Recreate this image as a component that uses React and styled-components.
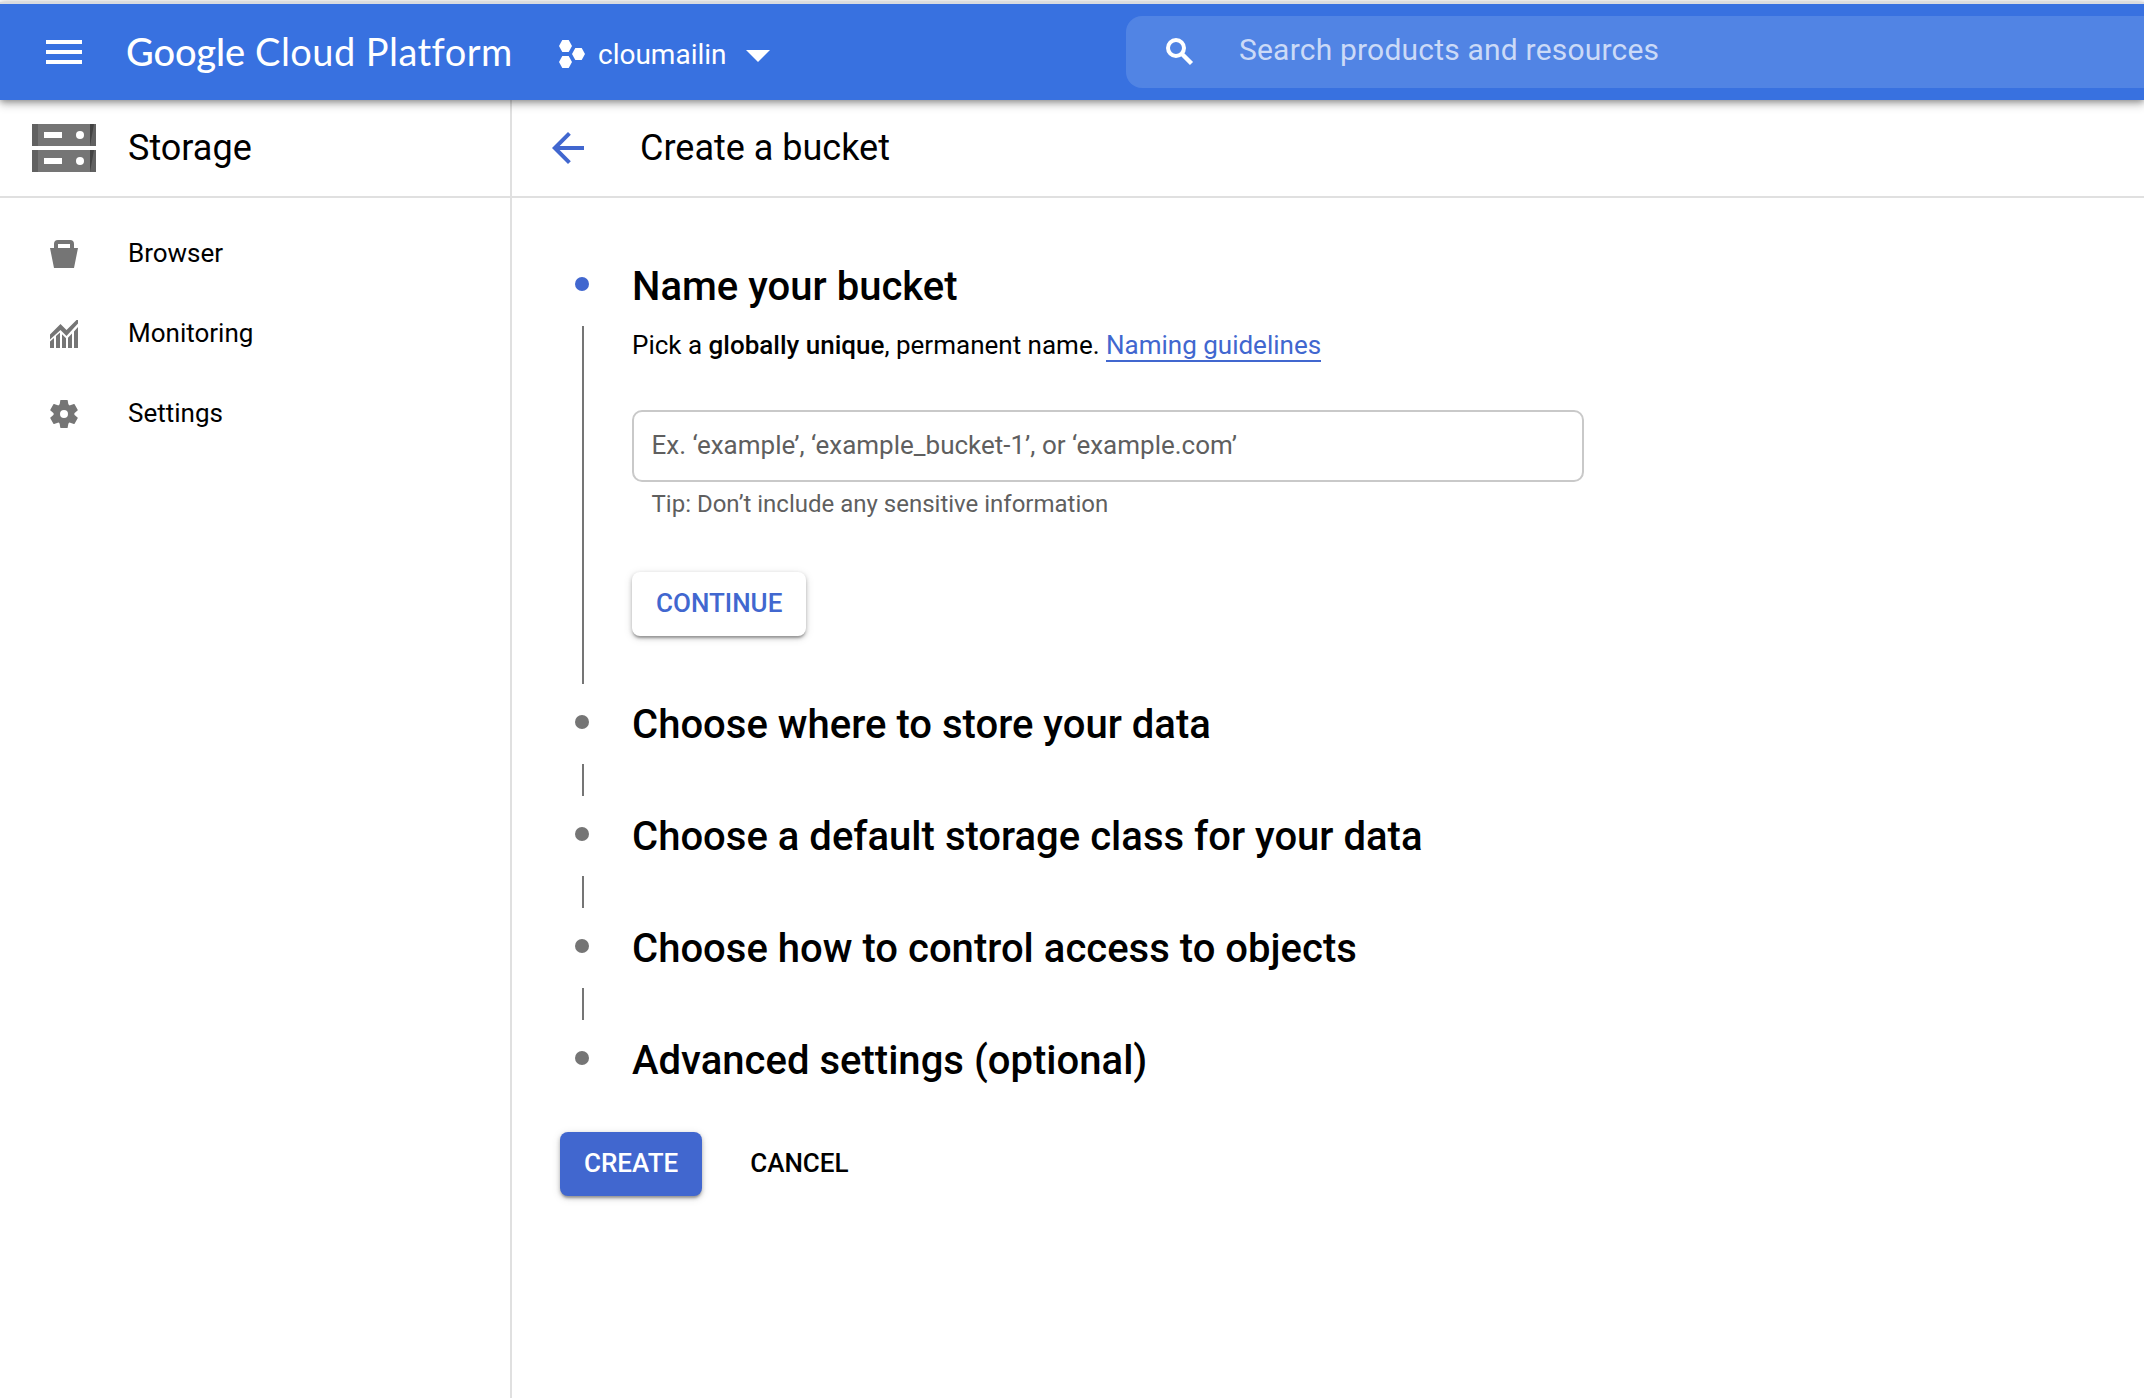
import React from "react";
import styled, { createGlobalStyle, css } from "styled-components";

const font = `Roboto, "Noto Sans", sans-serif`;
const colors = {
  header: "#3871e0",
  search: "#5184e4",
  accent: "#4167cf",
  line: "#e0e0e0",
  icon: "#757575",
  muted: "#5f5f5f",
};

const GlobalStyle = createGlobalStyle`
  * { box-sizing: border-box; }
  body {
    margin: 0;
    background: #fff;
    color: #000;
    font-family: ${font};
    font-size: 26px;
    overflow: hidden;
  }
  h1, h2, p { margin: 0; font-weight: 400; }
  button, input { font-family: inherit; }
`;

const Page = styled.div`
  display: flex;
  flex-direction: column;
  width: 100%;
  height: 100vh;
  padding-top: 2px;
`;

const Header = styled.header`
  position: relative;
  z-index: 1;
  display: flex;
  flex: none;
  align-items: center;
  height: 98px;
  padding-left: 40px;
  border-top: 2px solid #d9dbdf;
  background: ${colors.header};
  box-shadow: 0 4px 9px rgba(0, 0, 0, 0.28), 0 1px 6px rgba(0, 0, 0, 0.28);
`;

const IconButton = styled.button`
  display: flex;
  flex: none;
  padding: 0;
  border: 0;
  background: none;
  color: ${(p) => p.$color};
`;

const Logo = styled.div`
  display: flex;
  flex: none;
  gap: 10px;
  width: 418px;
  padding: 0 0 2px 38px;
  color: #fff;
  font-family: Lato, sans-serif;
  font-size: 38px;
  line-height: 46px;
  white-space: nowrap;
`;

const LogoWord = styled.span`
  font-weight: ${(p) => (p.$strong ? 500 : 400)};
  letter-spacing: ${(p) => (p.$strong ? "-0.1px" : "0.45px")};
`;

const Project = styled.div`
  display: flex;
  flex: none;
  align-items: center;
  width: 620px;
  padding: 4px 0 0 53px;
  color: #fff;
  font-size: 28px;
  line-height: 33px;
`;

const ProjectName = styled.span`
  margin: 0 19px 0 13px;
`;

const Caret = styled.span`
  margin-top: 4px;
  border: 12px solid transparent;
  border-top-color: #fff;
  border-bottom: 0;
`;

const Search = styled.label`
  display: flex;
  flex: 1;
  align-items: center;
  height: 72px;
  padding-left: 36px;
  border-radius: 16px 0 0 16px;
  background: ${colors.search};
`;

const SearchInput = styled.input`
  flex: 1;
  height: 72px;
  padding: 0 0 5px 41px;
  border: 0;
  background: none;
  font-size: 30px;
  letter-spacing: 0.2px;
  &::placeholder { color: #cbdaf7; opacity: 1; }
`;

const Body = styled.div`
  display: flex;
  flex: 1;
`;

const Sidebar = styled.aside`
  width: 512px;
  border-right: 2px solid ${colors.line};
`;

const Main = styled.main`
  flex: 1;
`;

const TitleBar = styled.div`
  display: flex;
  align-items: center;
  height: 98px;
  padding-left: ${(p) => p.$indent}px;
  gap: ${(p) => p.$gap}px;
  border-bottom: 2px solid ${colors.line};
`;

const Title = styled.h1`
  font-size: 36px;
  line-height: 42px;
`;

const Nav = styled.nav`
  display: flex;
  flex-direction: column;
  padding-top: 16px;
`;

const NavItem = styled.a`
  display: flex;
  align-items: center;
  gap: 50px;
  height: 80px;
  padding-left: 50px;
`;

const Label = styled.span`
  padding-bottom: 2px;
  line-height: 30px;
`;

const Form = styled.div`
  padding: 63px 0 0 48px;
`;

const StepRow = styled.section`
  display: grid;
  grid-template-columns: 24px 1fr;
  column-gap: 38px;
  min-height: ${(p) => (p.$last ? 97 : 112)}px;
  padding-left: 10px;
`;

const Rail = styled.div`
  display: flex;
  flex-direction: column;
  align-items: center;
  gap: 35px;
  padding: 16px 0 15px;
`;

const Dot = styled.span`
  flex: none;
  width: 14px;
  height: 14px;
  border-radius: 50%;
  background: ${(p) => (p.$active ? colors.accent : colors.icon)};
`;

const RailLine = styled.span`
  flex: 1;
  width: 2px;
  margin-left: 2px;
  background: ${colors.icon};
`;

const StepContent = styled.div`
  padding-top: 2px;
  padding-bottom: ${(p) => (p.$open ? 63 : 0)}px;
`;

const StepTitle = styled.h2`
  font-size: 40px;
  font-weight: 500;
  letter-spacing: 0.02px;
  line-height: 47px;
`;

const Description = styled.p`
  margin-top: 20px;
  line-height: 30px;
`;

const Strong = styled.strong`
  font-weight: 500;
`;

const Link = styled.a`
  color: ${colors.accent};
  border-bottom: 2px solid ${colors.accent};
`;

const NameInput = styled.input`
  display: block;
  width: 952px;
  height: 72px;
  margin-top: 50px;
  padding: 0 16px 2px 17.5px;
  border: 2px solid #c9c9c9;
  border-radius: 10px;
  background: #fff;
  font-size: 26px;
  &::placeholder { color: ${colors.muted}; opacity: 1; }
`;

const Hint = styled.p`
  margin-top: 8px;
  padding-left: 19.5px;
  color: ${colors.muted};
  font-size: 24px;
  line-height: 28px;
`;

const raised = css`
  box-shadow: 0 3px 2px -1px rgba(0, 0, 0, 0.2), 0 2px 4px rgba(0, 0, 0, 0.24),
    0 2px 10px rgba(0, 0, 0, 0.12);
`;

const variants = {
  outlined: css`
    ${raised}
    background: #fff;
    color: ${colors.accent};
  `,
  primary: css`
    ${raised}
    background: ${colors.accent};
    color: #fff;
  `,
  text: css`
    background: none;
    color: #000;
  `,
};

const Button = styled.button`
  display: block;
  height: 64px;
  margin-top: ${(p) => p.$top || 0}px;
  padding: 0 24px 2px;
  border: 0;
  border-radius: 8px;
  font-size: 26px;
  font-weight: 500;
  ${(p) => variants[p.$variant]}
`;

const Actions = styled.div`
  display: flex;
  gap: 24px;
`;

const MenuIcon = () => (
  <svg width="48" height="48" viewBox="0 0 24 24" fill="currentColor">
    <path d="M3 18h18v-2H3v2zm0-5h18v-2H3v2zm0-7v2h18V6H3z" />
  </svg>
);

const ProjectIcon = () => (
  <svg width="26" height="28" viewBox="0 0 26 28" fill="#fff">
    <path d="M3.300 0h6.400L13 6l-3.300 6H3.300L0 6z" />
    <path d="M16.300 8h6.400L26 14l-3.300 6h-6.400L13 14z" />
    <path d="M3.300 16h6.400L13 22l-3.300 6H3.300L0 22z" />
  </svg>
);

const SearchIcon = () => (
  <svg width="36" height="36" viewBox="0 0 36 36" fill="none" stroke="#fff">
    <circle cx="14" cy="14" r="8" strokeWidth="4" />
    <path d="M19.500 19.500L29.500 29.500" strokeWidth="4.400" />
  </svg>
);

const ArrowBackIcon = () => (
  <svg width="48" height="48" viewBox="0 0 24 24" fill="currentColor">
    <path d="M20 11H7.830l5.590-5.590L12 4l-8 8 8 8 1.410-1.410L7.830 13H20v-2z" />
  </svg>
);

const StorageIcon = () => (
  <svg width="64" height="48" viewBox="0 0 64 48">
    {[0, 26].map((y) => (
      <g key={y} transform={`translate(0 ${y})`}>
        <path fill="#757575" d="M0 0h64v22H0z" />
        <path fill="#616161" d="M0 0h6v22H0zM58 0h6v22h-6z" />
        <path fill="#424242" d="M58 0h4l-4 22z" />
        <path fill="#fff" d="M12 8h18v6H12z" />
        <circle fill="#fff" cx="48" cy="11" r="4" />
      </g>
    ))}
  </svg>
);

const BucketIcon = () => (
  <svg width="28" height="28" viewBox="0 0 28 28" fill={colors.icon}>
    <path
      fillRule="evenodd"
      d="M4 8V4a4 4 0 0 1 4-4h12a4 4 0 0 1 4 4v4h4l-4 20H4L0 8zM8 4v4h12V4z"
    />
  </svg>
);

const MonitoringIcon = () => (
  <svg width="28" height="28" viewBox="0 0 28 28" fill={colors.icon}>
    <path d="M0 14.500L10.500 4l6 6L26.500 0H28v3.500L16.500 16l-6-6L0 19.500z" />
    <path d="M0 21.500l4-3.600V28H0zM6 16l4-3.600V28H6zM12 14.300l4 4V28h-4zM18 17.800l4-4.300V28h-4zM24 11.400l4-4.400v21h-4z" />
  </svg>
);

const GearIcon = () => (
  <svg width="28" height="28" viewBox="0 0 28 28" fill={colors.icon}>
    <circle cx="14" cy="14" r="7.200" fill="none" stroke={colors.icon} strokeWidth="6.400" />
    {[0, 60, 120, 180, 240, 300].map((angle) => (
      <path
        key={angle}
        transform={`rotate(${angle} 14 14)`}
        d="M10.900 0h6.200q.5 0 .6.500l.8 4.500h-9l.8-4.500q.1-.5.6-.5z"
      />
    ))}
  </svg>
);

const navItems = [
  { label: "Browser", Icon: BucketIcon },
  { label: "Monitoring", Icon: MonitoringIcon },
  { label: "Settings", Icon: GearIcon },
];

const laterSteps = [
  "Choose where to store your data",
  "Choose a default storage class for your data",
  "Choose how to control access to objects",
  "Advanced settings (optional)",
];

function Step({ title, active, last, children }) {
  return (
    <StepRow $last={last}>
      <Rail>
        <Dot $active={active} />
        {!last && <RailLine />}
      </Rail>
      <StepContent $open={Boolean(children)}>
        <StepTitle>{title}</StepTitle>
        {children}
      </StepContent>
    </StepRow>
  );
}

export default function App() {
  return (
    <Page>
      <GlobalStyle />
      <Header>
        <IconButton $color="#fff" aria-label="Menu">
          <MenuIcon />
        </IconButton>
        <Logo>
          <LogoWord $strong>Google</LogoWord>
          <LogoWord>Cloud Platform</LogoWord>
        </Logo>
        <Project>
          <ProjectIcon />
          <ProjectName>cloumailin</ProjectName>
          <Caret />
        </Project>
        <Search>
          <SearchIcon />
          <SearchInput placeholder="Search products and resources" />
        </Search>
      </Header>
      <Body>
        <Sidebar>
          <TitleBar $indent={32} $gap={32}>
            <StorageIcon />
            <Title>Storage</Title>
          </TitleBar>
          <Nav>
            {navItems.map(({ label, Icon }) => (
              <NavItem key={label}>
                <Icon />
                <Label>{label}</Label>
              </NavItem>
            ))}
          </Nav>
        </Sidebar>
        <Main>
          <TitleBar $indent={32} $gap={48}>
            <IconButton $color={colors.accent} aria-label="Back">
              <ArrowBackIcon />
            </IconButton>
            <Title>Create a bucket</Title>
          </TitleBar>
          <Form>
            <Step title="Name your bucket" active>
              <Description>
                Pick a <Strong>globally unique</Strong>, permanent name.{" "}
                <Link>Naming guidelines</Link>
              </Description>
              <NameInput placeholder="Ex. ‘example’, ‘example_bucket-1’, or ‘example.com’" />
              <Hint>Tip: Don’t include any sensitive information</Hint>
              <Button $variant="outlined" $top={54}>CONTINUE</Button>
            </Step>
            {laterSteps.map((title, i) => (
              <Step key={title} title={title} last={i === laterSteps.length - 1} />
            ))}
            <Actions>
              <Button $variant="primary">CREATE</Button>
              <Button $variant="text">CANCEL</Button>
            </Actions>
          </Form>
        </Main>
      </Body>
    </Page>
  );
}
